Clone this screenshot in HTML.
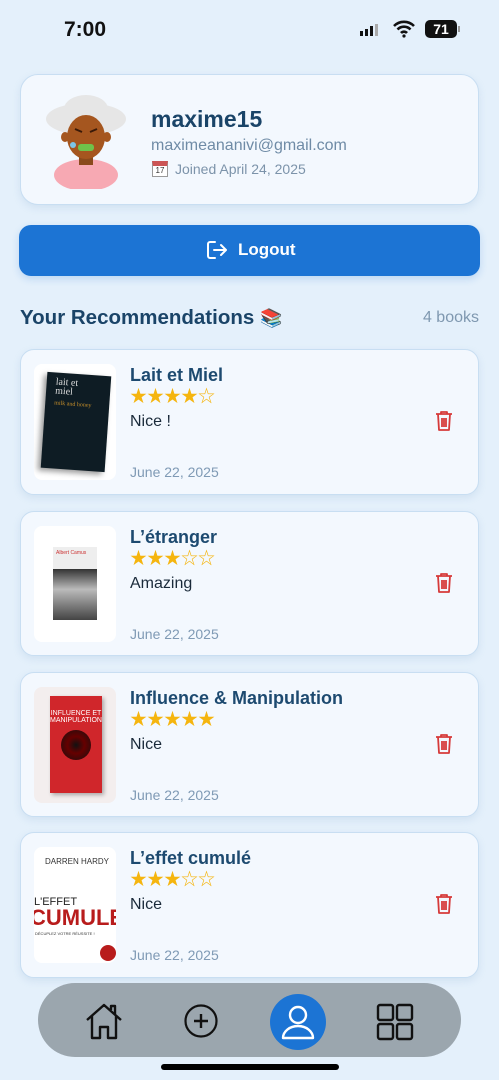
<!DOCTYPE html>
<html><head><meta charset="utf-8"><style>
*{margin:0;padding:0;box-sizing:border-box}
body{width:499px;height:1080px;background:#e4f0fb;font-family:"Liberation Sans","Noto Sans CJK JP",sans-serif;position:relative;overflow:hidden}
.abs{position:absolute}
.card{position:absolute;left:20px;width:459px;background:#f3f8fe;border:1px solid #c8def2;border-radius:14px;box-shadow:0 3px 8px rgba(120,160,200,.18)}
.cover{position:absolute;left:13px;top:14px;width:82px;height:116px;background:#fff;border-radius:8px;overflow:hidden}
.t{position:absolute;left:109px;top:15px;font-size:18px;font-weight:bold;color:#1d4a70}
.st{position:absolute;left:109px;top:37px;font-size:17px;line-height:20px;color:#f5b50f}
.d{position:absolute;left:109px;top:63px;font-size:16px;color:#1a2a3a}
.dt{position:absolute;left:109px;top:114px;font-size:14px;color:#7f9ab5}
.tr{position:absolute;left:413px;top:60px}
</style></head><body>
<div class="abs" style="left:64px;top:18px;font-size:21px;font-weight:bold;color:#111">7:00</div>
<div class="abs" style="left:360px;top:24px;display:flex;gap:2px;align-items:flex-end">
<div style="width:3px;height:5px;background:#111"></div><div style="width:3px;height:7px;background:#111"></div><div style="width:3px;height:10px;background:#111"></div><div style="width:3px;height:12px;background:#aaa"></div></div>
<svg class="abs" style="left:393px;top:20px" width="22" height="18" viewBox="0 0 22 18"><path d="M1 6a14 14 0 0 1 20 0M4.5 9.5a9 9 0 0 1 13 0M8 13a4 4 0 0 1 6 0" stroke="#111" stroke-width="2.6" fill="none"/><circle cx="11" cy="16" r="1.6" fill="#111"/></svg>
<div class="abs" style="left:425px;top:20px;width:32px;height:18px;background:#111;border-radius:5px;color:#fff;font-size:14px;font-weight:bold;text-align:center;line-height:18px">71</div>
<div class="abs" style="left:458px;top:26px;width:2px;height:6px;background:#999"></div>

<div class="card" style="top:74px;height:131px;border-radius:18px;background:#f3f8fe">
<svg class="abs" style="left:22px;top:18px" width="86" height="96" viewBox="0 0 86 96">
<ellipse cx="43" cy="26" rx="40" ry="16" fill="#e6e6e6"/><ellipse cx="43" cy="16" rx="22" ry="14" fill="#e6e6e6"/>
<ellipse cx="43" cy="82" rx="32" ry="16" fill="#f7a9b3"/><rect x="36" y="58" width="14" height="14" fill="#8a4a1c"/>
<ellipse cx="43" cy="44" rx="19" ry="22" fill="#a5561f"/><ellipse cx="22" cy="44" rx="4" ry="5" fill="#a5561f"/><ellipse cx="64" cy="44" rx="4" ry="5" fill="#a5561f"/>
<rect x="35" y="51" width="16" height="7" rx="3" fill="#6fc24a"/><circle cx="30" cy="52" r="3" fill="#7cc6e8"/>
<path d="M32 36l7 3M54 36l-7 3" stroke="#3a1a08" stroke-width="2"/></svg>
<div class="abs" style="left:130px;top:31px;font-size:23px;font-weight:bold;color:#1a4468">maxime15</div>
<div class="abs" style="left:130px;top:62px;font-size:16px;color:#6f8ba6">maximeananivi@gmail.com</div>
<div class="abs" style="left:131px;top:86px;width:16px;height:16px;background:#fff;border:1px solid #999;border-top:5px solid #c55;font-size:8px;text-align:center;color:#333">17</div>
<div class="abs" style="left:154px;top:86px;font-size:14px;color:#7c93aa">Joined April 24, 2025</div>
</div>

<div class="abs" style="left:19px;top:225px;width:461px;height:51px;background:#1c74d4;border-radius:12px;box-shadow:0 3px 8px rgba(28,116,212,.2)">
<svg class="abs" style="left:187px;top:15px" width="22" height="20" viewBox="0 0 22 20"><path d="M9 2H4a2 2 0 0 0-2 2v12a2 2 0 0 0 2 2h5M8 10h12M15 5l5 5-5 5" stroke="#fff" stroke-width="2" fill="none" stroke-linecap="round" stroke-linejoin="round"/></svg>
<div class="abs" style="left:219px;top:15px;font-size:17px;font-weight:bold;color:#fff">Logout</div></div>

<div class="abs" style="left:20px;top:306px;font-size:20.5px;font-weight:bold;color:#1a4468">Your Recommendations <span style="font-size:18px">📚</span></div>
<div class="abs" style="right:20px;top:309px;font-size:16px;color:#7f98b0">4 books</div>

<svg width="0" height="0" style="position:absolute"><defs><symbol id="trash" viewBox="0 0 20 22"><path d="M2 4h16M7 4V2h6v2M4 4l1 16h10l1-16M8 8v9M10 8v9M12 8v9" stroke="#d63a3a" stroke-width="1.8" fill="none" stroke-linejoin="round"/></symbol></defs></svg>

<div class="card" style="top:349px;height:146px">
<div class="cover"><div style="position:absolute;left:10px;top:10px;width:64px;height:96px;background:#0e1c24;transform:rotate(4deg);box-shadow:-3px 3px 6px rgba(0,0,0,.4);color:#ddd;font-family:'Liberation Serif',serif;font-size:10px;padding:5px 9px;line-height:9px">lait et<br>miel<div style="color:#c8902a;font-size:6px;margin-top:4px">milk and honey</div></div></div>
<div class="t">Lait et Miel</div><div class="st">★★★★☆</div><div class="d">Nice !</div><div class="dt">June 22, 2025</div>
<svg class="tr" width="20" height="22"><use href="#trash"/></svg></div>

<div class="card" style="top:511px;height:145px">
<div class="cover"><div style="position:absolute;left:19px;top:21px;width:44px;height:73px;background:#eee"><div style="color:#c33;font-size:5px;padding:3px">Albert Camus</div><div style="position:absolute;top:22px;left:0;width:44px;height:51px;background:linear-gradient(#333,#bbb 40%,#444)"></div></div></div>
<div class="t">L’étranger</div><div class="st">★★★☆☆</div><div class="d">Amazing</div><div class="dt">June 22, 2025</div>
<svg class="tr" width="20" height="22"><use href="#trash"/></svg></div>

<div class="card" style="top:672px;height:145px">
<div class="cover" style="background:#f3eeee"><div style="position:absolute;left:16px;top:9px;width:52px;height:97px;background:#d0262b;box-shadow:2px 2px 4px rgba(0,0,0,.3);color:#fff;font-size:7px;text-align:center;padding-top:14px">INFLUENCE ET<br>MANIPULATION<div style="width:30px;height:30px;border-radius:50%;background:radial-gradient(#111,#600 40%,#111);margin:6px auto"></div></div></div>
<div class="t">Influence &amp; Manipulation</div><div class="st">★★★★★</div><div class="d">Nice</div><div class="dt">June 22, 2025</div>
<svg class="tr" width="20" height="22"><use href="#trash"/></svg></div>

<div class="card" style="top:832px;height:146px">
<div class="cover"><div style="position:absolute;left:11px;top:10px;font-size:8px;color:#333">DARREN HARDY</div><div style="position:absolute;left:0;top:49px;font-size:11px;color:#222">L'EFFET</div><div style="position:absolute;left:-4px;top:58px;font-size:22px;font-weight:bold;color:#b81c1c">CUMULE</div><div style="position:absolute;left:1px;top:84px;font-size:4px;color:#333">DÉCUPLEZ VOTRE RÉUSSITE !</div><div style="position:absolute;left:66px;top:98px;width:16px;height:16px;border-radius:50%;background:#b81c1c"></div></div>
<div class="t">L’effet cumulé</div><div class="st">★★★☆☆</div><div class="d">Nice</div><div class="dt">June 22, 2025</div>
<svg class="tr" width="20" height="22"><use href="#trash"/></svg></div>

<div class="abs" style="left:38px;top:983px;width:423px;height:74px;background:#9ba6ae;border-radius:37px">
<svg class="abs" style="left:46px;top:19px" width="40" height="38" viewBox="0 0 40 38"><path d="M3 18L20 3l17 15M8 14v22h8V25h8v11h8V14M27 8V4h4v8" stroke="#111" stroke-width="2.4" fill="none" stroke-linejoin="round"/></svg>
<svg class="abs" style="left:146px;top:21px" width="34" height="34" viewBox="0 0 34 34"><circle cx="17" cy="17" r="15.5" stroke="#111" stroke-width="2.2" fill="none"/><path d="M17 10v14M10 17h14" stroke="#111" stroke-width="2.4"/></svg>
<div class="abs" style="left:232px;top:11px;width:56px;height:56px;border-radius:50%;background:#1c74d4"></div>
<svg class="abs" style="left:242px;top:20px" width="36" height="38" viewBox="0 0 36 38"><circle cx="18" cy="12" r="8" stroke="#fff" stroke-width="2.4" fill="none"/><path d="M3 35a15 12 0 0 1 30 0z" stroke="#fff" stroke-width="2.4" fill="none" stroke-linejoin="round"/></svg>
<svg class="abs" style="left:338px;top:20px" width="38" height="38" viewBox="0 0 38 38"><g stroke="#111" stroke-width="2.4" fill="none"><rect x="2" y="2" width="15" height="15" rx="2"/><rect x="21" y="2" width="15" height="15" rx="2"/><rect x="2" y="21" width="15" height="15" rx="2"/><rect x="21" y="21" width="15" height="15" rx="2"/></g></svg>
</div>
<div class="abs" style="left:161px;top:1064px;width:178px;height:6px;background:#000;border-radius:3px"></div>
</body></html>
